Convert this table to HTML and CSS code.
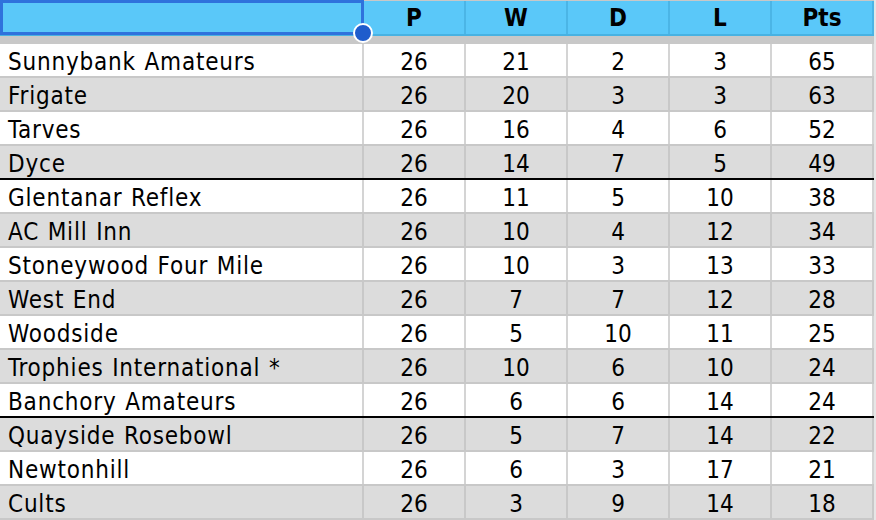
FILE: index.html
```html
<!DOCTYPE html>
<html>
<head>
<meta charset="utf-8">
<link rel="stylesheet" href="styles.css">
</head>
<body>
<div class="sheet">
  <div class="head">
    <div class="hc name"></div>
    <div class="hc">P</div>
    <div class="hc">W</div>
    <div class="hc">D</div>
    <div class="hc">L</div>
    <div class="hc">Pts</div>
  </div>
  <div class="sel"><span class="handle"></span></div>
  <div class="gap"></div>
  <div class="body">
    <div class="row"><div class="c name">Sunnybank Amateurs</div><div class="c">26</div><div class="c">21</div><div class="c">2</div><div class="c">3</div><div class="c">65</div></div>
    <div class="row alt"><div class="c name">Frigate</div><div class="c">26</div><div class="c">20</div><div class="c">3</div><div class="c">3</div><div class="c">63</div></div>
    <div class="row"><div class="c name">Tarves</div><div class="c">26</div><div class="c">16</div><div class="c">4</div><div class="c">6</div><div class="c">52</div></div>
    <div class="row alt cut"><div class="c name">Dyce</div><div class="c">26</div><div class="c">14</div><div class="c">7</div><div class="c">5</div><div class="c">49</div></div>
    <div class="row"><div class="c name">Glentanar Reflex</div><div class="c">26</div><div class="c">11</div><div class="c">5</div><div class="c">10</div><div class="c">38</div></div>
    <div class="row alt"><div class="c name">AC Mill Inn</div><div class="c">26</div><div class="c">10</div><div class="c">4</div><div class="c">12</div><div class="c">34</div></div>
    <div class="row"><div class="c name">Stoneywood Four Mile</div><div class="c">26</div><div class="c">10</div><div class="c">3</div><div class="c">13</div><div class="c">33</div></div>
    <div class="row alt"><div class="c name">West End</div><div class="c">26</div><div class="c">7</div><div class="c">7</div><div class="c">12</div><div class="c">28</div></div>
    <div class="row"><div class="c name">Woodside</div><div class="c">26</div><div class="c">5</div><div class="c">10</div><div class="c">11</div><div class="c">25</div></div>
    <div class="row alt"><div class="c name">Trophies International *</div><div class="c">26</div><div class="c">10</div><div class="c">6</div><div class="c">10</div><div class="c">24</div></div>
    <div class="row cut"><div class="c name">Banchory Amateurs</div><div class="c">26</div><div class="c">6</div><div class="c">6</div><div class="c">14</div><div class="c">24</div></div>
    <div class="row alt"><div class="c name">Quayside Rosebowl</div><div class="c">26</div><div class="c">5</div><div class="c">7</div><div class="c">14</div><div class="c">22</div></div>
    <div class="row"><div class="c name">Newtonhill</div><div class="c">26</div><div class="c">6</div><div class="c">3</div><div class="c">17</div><div class="c">21</div></div>
    <div class="row alt"><div class="c name">Cults</div><div class="c">26</div><div class="c">3</div><div class="c">9</div><div class="c">14</div><div class="c">18</div></div>
  </div>
</div>
</body>
</html>
```

FILE: styles.css
```css
html, body {
  margin: 0;
  padding: 0;
  background: #e6e6e6;
}
body {
  font-family: "DejaVu Sans Condensed", "DejaVu Sans", sans-serif;
  font-stretch: condensed;
  font-size: 24px;
  color: #000;
  width: 876px;
  height: 520px;
  overflow: hidden;
}
.sheet {
  position: relative;
  width: 874px;
}
.head {
  display: grid;
  grid-template-columns: 364px repeat(5, 102px);
  height: 36px;
  box-sizing: border-box;
  border-top: 1px solid #c8c8c8;
  border-bottom: 2px solid #48b2e2;
  background: #5ac8f9;
}
.hc {
  display: flex;
  align-items: center;
  justify-content: center;
  font-weight: bold;
  padding-top: 1px;
  border-right: 2px solid #4bb5e6;
}
.sel {
  position: absolute;
  left: 0;
  top: 0;
  width: 364px;
  height: 35px;
  box-sizing: border-box;
  border: 3px solid #2f72dc;
}
.handle {
  position: absolute;
  right: -12px;
  bottom: -11px;
  width: 16px;
  height: 16px;
  border-radius: 50%;
  background: #1f5ccc;
  border: 2px solid #fff;
}
.gap {
  height: 8px;
  background: #c8c8c8;
}
.row {
  display: grid;
  grid-template-columns: 364px repeat(5, 102px);
  height: 34px;
  box-sizing: border-box;
  background: #fff;
  border-bottom: 2px solid #c8c8c8;
}
.row.alt {
  background: #dcdcdc;
}
.row.cut {
  border-bottom-color: #000;
}
.c {
  display: flex;
  align-items: center;
  justify-content: center;
  padding-top: 3px;
  border-right: 2px solid #d4d4d4;
}
.row.alt .c {
  border-right-color: #c8c8c8;
}
.c.name {
  justify-content: flex-start;
  padding-left: 8px;
  letter-spacing: 0.8px;
  word-spacing: 1px;
}
```
